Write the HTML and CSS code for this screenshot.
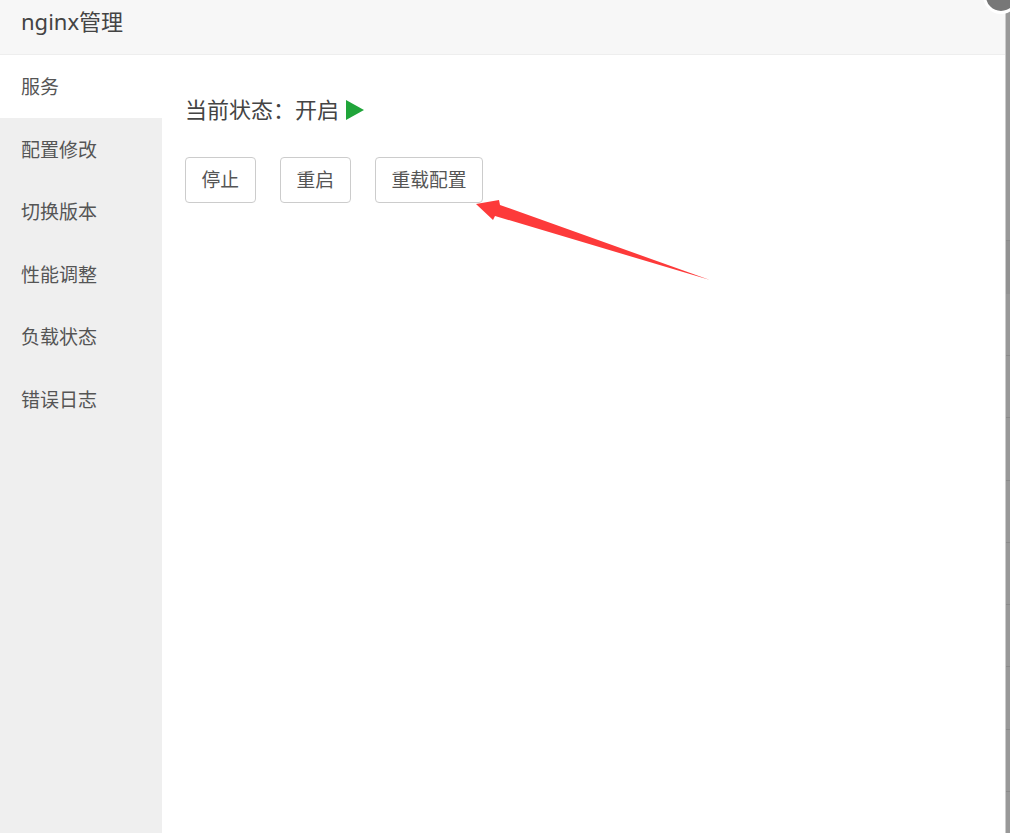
FILE: index.html
```html
<html>

<head>
<title>nginx管理</title>
<link rel="stylesheet" href="styles.css">
</head>

<body>

<div id="window">
	<div id="header">nginx管理</div>
	<div id="content">
		<div id="menu">
			<div class="menu-item active">服务</div>
			<div class="menu-item">配置修改</div>
			<div class="menu-item">切换版本</div>
			<div class="menu-item">性能调整</div>
			<div class="menu-item">负载状态</div>
			<div class="menu-item">错误日志</div>
		</div>
		<div id="main">
			<div id="status">
				<span>当前状态：开启</span>
				<svg class="status-icon" width="18" height="20" viewBox="0 0 18 20"><path d="M0 0L18 10L0 20Z" fill="#20a53a"/></svg>
			</div>
			<div id="buttons">
				<button class="btn">停止</button>
				<button class="btn">重启</button>
				<button class="btn">重载配置</button>
			</div>
		</div>
	</div>
</div>

<div id="strip">
	<div class="strip-cell top"></div>
	<div class="strip-cell dim"></div>
	<div class="strip-cell second"></div>
	<div class="strip-cell"></div>
	<div class="strip-cell"></div>
	<div class="strip-cell"></div>
	<div class="strip-cell"></div>
	<div class="strip-cell"></div>
	<div class="strip-cell"></div>
	<div class="strip-cell"></div>
</div>

<div id="close"></div>

<svg id="arrow" width="260" height="110" viewBox="0 0 260 110"><path d="M16 24L39 20L40 25L250 100L35 36L33 40Z" fill="#fd3a3a"/></svg>

</body>

</html>
```

FILE: styles.css
```css
html, body {
	margin: 0;
	padding: 0;
	height: 100%;
	overflow: hidden;
}

body {
	display: flex;
	flex-direction: row;
	background-color: white;
	font-family: "Noto Sans", "Noto Sans CJK SC", sans-serif;
	color: #555;
}

#window {
	flex-grow: 1;
	display: flex;
	flex-direction: column;
	border-right: 1px solid #ccc;
}

#header {
	height: 54px;
	line-height: 42px;
	padding-left: 21px;
	font-size: 22px;
	color: #444;
	background-color: #f7f7f7;
	border-bottom: 1px solid #eee;
}

#content {
	flex-grow: 1;
	display: flex;
	flex-direction: row;
}

#menu {
	width: 162px;
	background-color: #efefef;
}

.menu-item {
	height: 62.4px;
	line-height: 65px;
	padding-left: 21px;
	font-size: 19px;
}

.menu-item.active {
	height: 63px;
	background-color: white;
}

#main {
	padding: 33px 23px;
}

#status {
	display: flex;
	align-items: center;
	height: 40px;
	font-size: 22px;
	color: #444;
}

.status-icon {
	margin-left: 7px;
	margin-top: 4px;
}

#buttons {
	display: flex;
	gap: 24.5px;
	margin-top: 29px;
}

.btn {
	height: 46px;
	padding: 0 15.5px 3px 15.5px;
	font-family: inherit;
	font-size: 18.75px;
	color: #555;
	background-color: white;
	border: 1px solid #ccc;
	border-radius: 4px;
}

#strip {
	width: 4px;
	display: flex;
	flex-direction: column;
	background-color: #999;
}

.strip-cell {
	flex-shrink: 0;
	height: 61.3px;
	border-bottom: 1px solid #8a8a8a;
}

.strip-cell.top {
	height: 240px;
}

.strip-cell.dim {
	height: 53px;
	background-color: #929292;
	border-bottom: none;
}

.strip-cell.second {
	height: 61px;
}

#close {
	position: absolute;
	top: -22px;
	left: 983px;
	width: 30px;
	height: 30px;
	background-color: #777;
	border: 3px solid white;
	border-radius: 50%;
}

#arrow {
	position: absolute;
	left: 460px;
	top: 180px;
	overflow: visible;
}
```
